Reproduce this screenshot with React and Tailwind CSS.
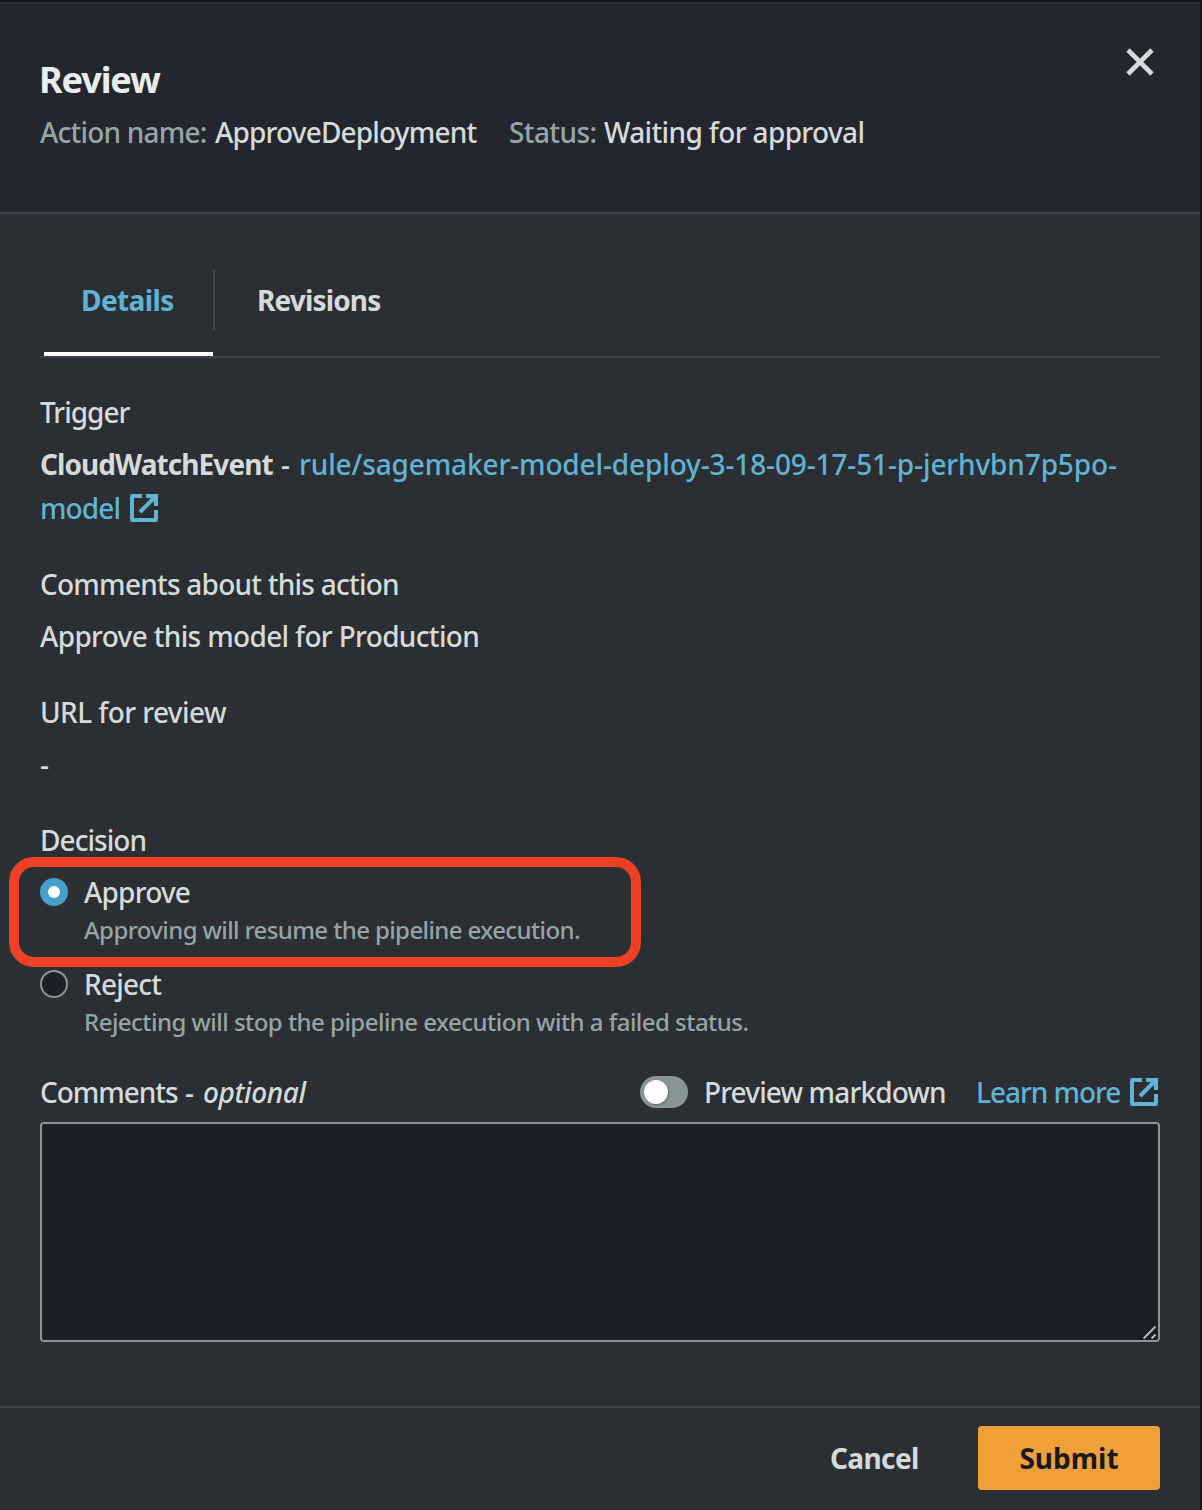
import React from "react";

function ExternalIcon() {
  return (
    <svg className="h-7 w-7 shrink-0" viewBox="0 0 28 28" fill="none" stroke="currentColor" strokeWidth="4">
      <path d="M12 2H2v24h24V16" strokeLinejoin="round" />
      <path d="M16 2h10v10" />
      <path d="M25 3L10 18" />
    </svg>
  );
}

function Field({ label, children }) {
  return (
    <div className="flex flex-col gap-2">
      <div>{label}</div>
      <div>{children}</div>
    </div>
  );
}

function Radio({ checked, label, hint }) {
  return (
    <div className="flex gap-4">
      {checked ? (
        <span className="mt-2 flex h-7 w-7 shrink-0 items-center justify-center rounded-full bg-[#489fc7]">
          <span className="h-3 w-3 rounded-full bg-white" />
        </span>
      ) : (
        <span className="mt-2 h-7 w-7 shrink-0 rounded-full border-2 border-[#879596] bg-[#1b1f28]" />
      )}
      <div className="flex flex-col">
        <div>{label}</div>
        <div className="text-2xl leading-8 text-[#95a5a6]">{hint}</div>
      </div>
    </div>
  );
}

export default function App() {
  return (
    <div className="h-[1510px] w-[1202px] overflow-hidden border-t-2 border-r-2 border-[#16181e] bg-[#2b2e33] font-['Noto_Sans',sans-serif] text-[28px] leading-[44px] font-medium whitespace-nowrap text-[#d5dbdb]">
      <header className="flex h-[212px] items-start justify-between border-t-2 border-b-2 border-t-[#2b2e33] border-b-[#414550] bg-[#23262e] pl-10">
        <div className="pt-[54px]">
          <h1 className="-ml-px text-4xl leading-[44px] font-bold tracking-[-1.1px] text-[#eaeded]">Review</h1>
          <div className="mt-2 flex">
            <span className="w-[175px] tracking-[-0.8px] text-[#95a5a6]">Action name:</span>
            <span className="w-[294px] tracking-[-0.83px]">ApproveDeployment</span>
            <span className="w-[95px] tracking-[-0.6px] text-[#95a5a6]">Status:</span>
            <span className="tracking-[-0.63px]">Waiting for approval</span>
          </div>
        </div>
        <button className="mt-11 mr-[46px]" aria-label="Close">
          <svg className="h-7 w-7" viewBox="0 0 28 28" fill="none" stroke="#d5dbdb" strokeWidth="4.6">
            <path d="M2 2l24 24M26 2L2 26" />
          </svg>
        </button>
      </header>

      <main className="h-[1192px] px-10 pt-14">
        <nav className="flex h-[88px] border-b-2 border-[#414550] pl-1 leading-[60px] font-bold">
          <div className="h-[86px] w-[169px] border-b-4 border-white pl-[37px] tracking-[-0.6px] text-[#5fb3d3]">Details</div>
          <div className="h-[60px] border-l-2 border-[#414550] pl-[42px] tracking-[-0.85px]">Revisions</div>
        </nav>

        <section className="flex flex-col gap-8 pt-8">
          <Field label={<span className="tracking-[-1px]">Trigger</span>}>
            <div className="flex">
              <span className="w-60 font-bold tracking-[-0.92px]">CloudWatchEvent</span>
              <span className="w-[19px] pl-px">-</span>
              <a className="tracking-[-0.13px] text-[#5fb3d3]">rule/sagemaker-model-deploy-3-18-09-17-51-p-jerhvbn7p5po-</a>
            </div>
            <a className="flex items-center text-[#5fb3d3]">
              <span className="w-[90px] tracking-[-0.9px]">model</span>
              <ExternalIcon />
            </a>
          </Field>
          <Field label={<span className="tracking-[-0.76px]">Comments about this action</span>}>
            <span className="tracking-[-0.66px]">Approve this model for Production</span>
          </Field>
          <Field label={<span className="tracking-[-0.58px]">URL for review</span>}>-</Field>
          <Field label={<span className="tracking-[-0.95px]">Decision</span>}>
            <div className="relative flex flex-col gap-4">
              <Radio
                checked
                label={<span className="tracking-[-0.8px]">Approve</span>}
                hint={<span className="tracking-[-0.61px]">Approving will resume the pipeline execution.</span>}
              />
              <Radio
                label={<span className="tracking-[-0.8px]">Reject</span>}
                hint={<span className="tracking-[-0.53px]">Rejecting will stop the pipeline execution with a failed status.</span>}
              />
              <div className="absolute -top-[13px] -left-[31px] h-[110px] w-[632px] rounded-[25px] border-[10px] border-[#ed4025]" />
            </div>
          </Field>
        </section>

        <section className="mt-8">
          <div className="flex items-center">
            <div className="mr-auto flex">
              <span className="w-[145px] tracking-[-1.05px]">Comments</span>
              <span className="w-[18px]">-</span>
              <em className="tracking-[-0.4px]">optional</em>
            </div>
            <div className="flex h-8 w-12 items-center rounded-full bg-[#879596] pl-1">
              <span className="h-6 w-6 rounded-full bg-white shadow-[1px_1px_2px_rgba(0,0,0,0.3)]" />
            </div>
            <span className="ml-4 w-[272px] tracking-[-0.87px]">Preview markdown</span>
            <a className="mr-0.5 flex items-center text-[#5fb3d3]">
              <span className="w-[154px] tracking-[-1.05px]">Learn more</span>
              <ExternalIcon />
            </a>
          </div>
          <textarea
            aria-label="Comments"
            className="mt-2 block h-[220px] w-[1120px] resize-none rounded border-2 border-[#879596] bg-[#1b1f28]"
          />
          <svg className="relative -top-[18px] left-[1102px] h-4 w-4" viewBox="0 0 16 16" fill="none">
            <path d="M0.500 14L13 1.500M8.500 14L13 9.500" stroke="#101218" strokeWidth="2" />
            <path d="M1.500 14.500L13.500 2.500M9.500 14.500L13.500 10.500" stroke="#b8babd" strokeWidth="2" />
          </svg>
        </section>
      </main>

      <footer className="flex h-[104px] items-start justify-end border-t-2 border-[#414550] pt-[18px] pr-10 font-bold">
        <button className="h-16 w-[148px] text-left tracking-[-0.62px]">Cancel</button>
        <button className="h-16 w-[182px] rounded bg-[#f19f39] text-center text-[#16191f]">Submit</button>
      </footer>
    </div>
  );
}
